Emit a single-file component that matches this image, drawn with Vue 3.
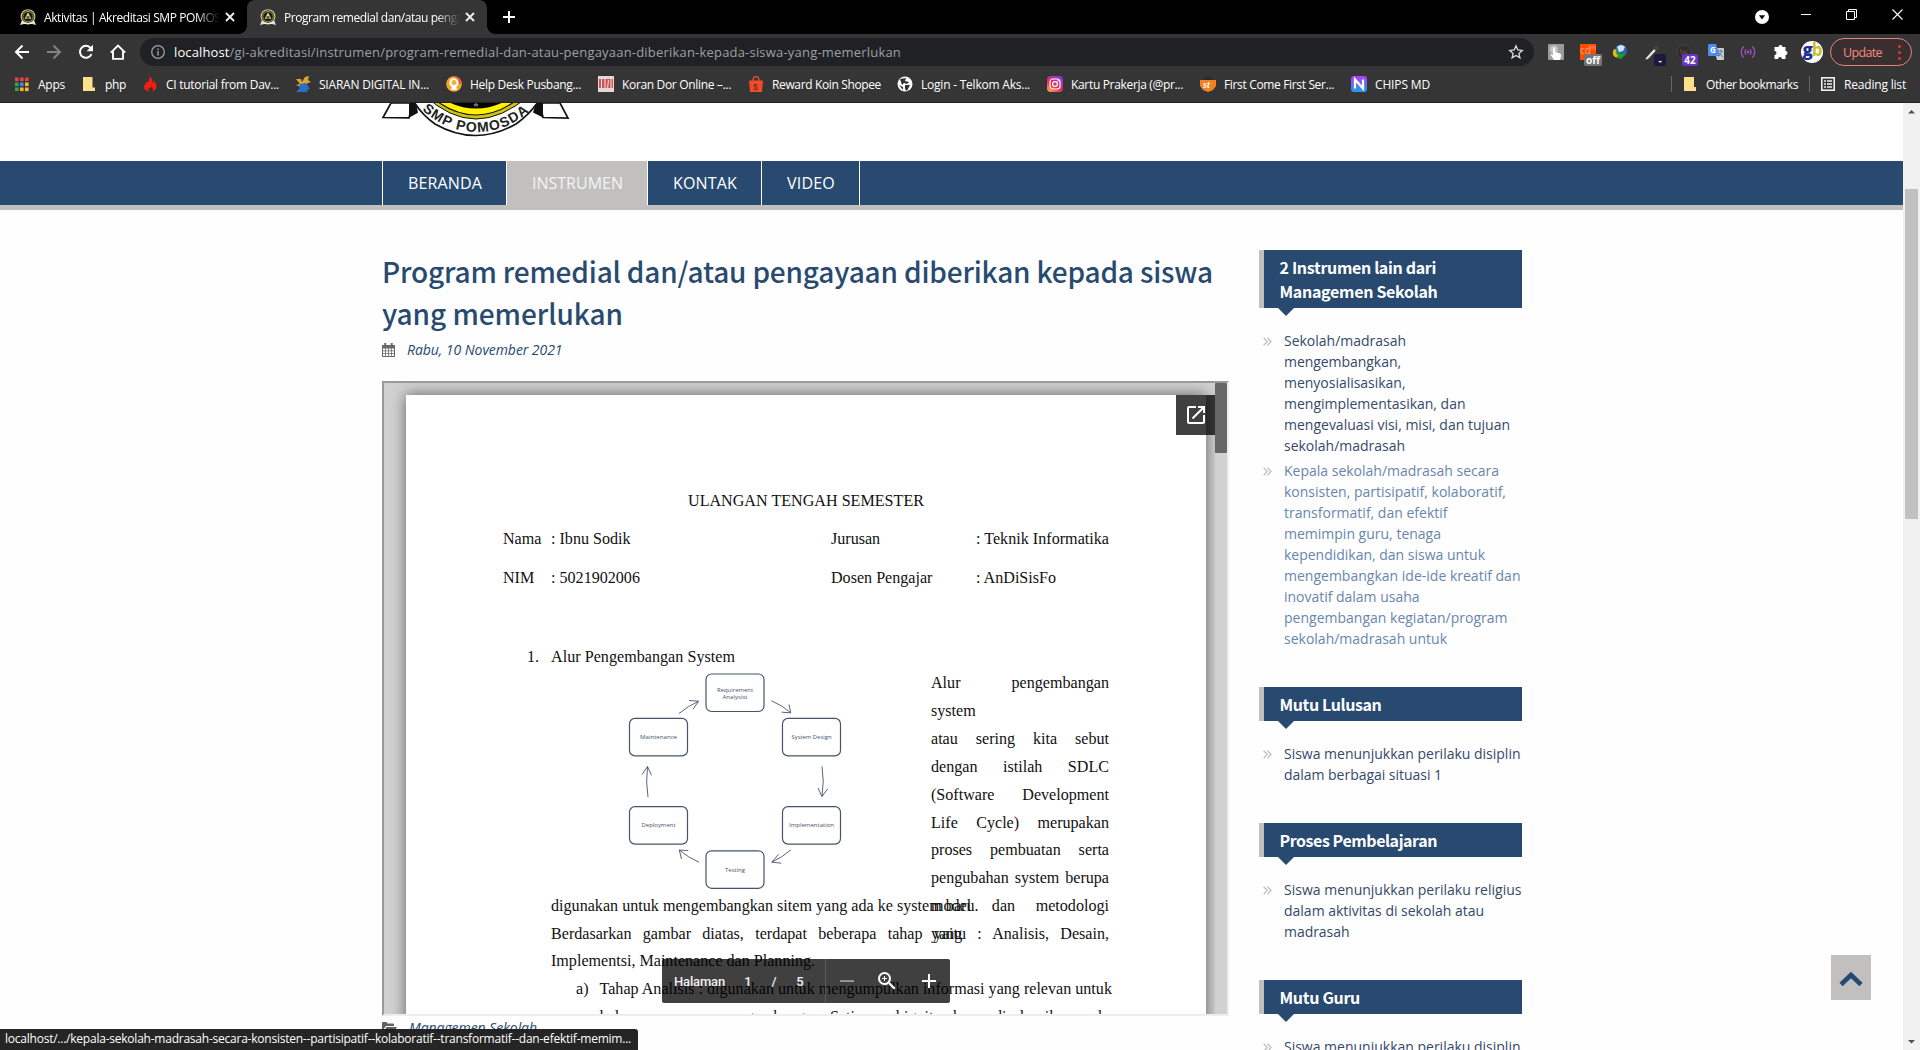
<script setup>
const vFit = {
  mounted(el, { value }) {
    const range = document.createRange()
    range.selectNodeContents(el)
    const natural = range.getBoundingClientRect().width
    const count = el.textContent.length
    el.style.letterSpacing = (value - natural) / count + 'px'
  }
}

const bookmarks = [
  { icon: 'apps', text: 'Apps', w: 27, box: 67 },
  { icon: 'folder', text: 'php', w: 21, box: 61 },
  { icon: 'flame', text: 'CI tutorial from Dav...', w: 113, box: 153 },
  { icon: 'siaran', text: 'SIARAN DIGITAL IN...', w: 110, box: 151 },
  { icon: 'help', text: 'Help Desk Pusbang...', w: 111, box: 152 },
  { icon: 'koran', text: 'Koran Dor Online –...', w: 109, box: 150 },
  { icon: 'shopee', text: 'Reward Koin Shopee', w: 109, box: 149 },
  { icon: 'globe', text: 'Login - Telkom Aks...', w: 109, box: 150 },
  { icon: 'insta', text: 'Kartu Prakerja (@pr...', w: 112, box: 153 },
  { icon: 'first', text: 'First Come First Ser...', w: 110, box: 151 },
  { icon: 'chips', text: 'CHIPS MD', w: 55, box: 90 }
]

const column = [
  'Alur pengembangan system',
  'atau sering kita sebut',
  'dengan istilah SDLC',
  '(Software Development',
  'Life Cycle) merupakan',
  'proses pembuatan serta',
  'pengubahan system berupa',
  'model dan metodologi yang'
]

const nodes = [
  { x: 155, y: 5, lines: ['Requirement', 'Analysist'], w: [36, 25] },
  { x: 231.5, y: 49.4, lines: ['System Design'], w: [40] },
  { x: 231.5, y: 137.6, lines: ['Implementation'], w: [45] },
  { x: 155, y: 181.8, lines: ['Testing'], w: [20] },
  { x: 78.5, y: 137.6, lines: ['Deployment'], w: [34] },
  { x: 78.5, y: 49.4, lines: ['Maintenance'], w: [37] }
]

const widgets = [
  {
    title: [['2 Instrumen lain dari', 156.5], ['Managemen Sekolah', 158]],
    items: [
      {
        lines: [
          ['Sekolah/madrasah', 122], ['mengembangkan,', 117], ['menyosialisasikan,', 121.5],
          ['mengimplementasikan, dan', 181.5], ['mengevaluasi visi, misi, dan tujuan', 226], ['sekolah/madrasah', 121]
        ]
      },
      {
        hover: true,
        lines: [
          ['Kepala sekolah/madrasah secara', 215], ['konsisten, partisipatif, kolaboratif,', 222], ['transformatif, dan efektif', 163.5],
          ['memimpin guru, tenaga', 157], ['kependidikan, dan siswa untuk', 201], ['mengembangkan ide-ide kreatif dan', 236.5],
          ['inovatif dalam usaha', 135.5], ['pengembangan kegiatan/program', 223.5], ['sekolah/madrasah untuk', 163]
        ]
      }
    ]
  },
  { title: [['Mutu Lulusan', 102]], items: [{ lines: [['Siswa menunjukkan perilaku disiplin', 236.5], ['dalam berbagai situasi 1', 158]] }] },
  { title: [['Proses Pembelajaran', 157.5]], items: [{ lines: [['Siswa menunjukkan perilaku religius', 237.5], ['dalam aktivitas di sekolah atau', 200], ['madrasah', 65.5]] }] },
  { title: [['Mutu Guru', 80.5]], items: [{ lines: [['Siswa menunjukkan perilaku disiplin', 236.5], ['dalam berbagai situasi', 145]] }] }
]
</script>

<template>
  <div class="window">
    <header class="chrome">
      <div class="tabs">
        <div v-for="(t, i) in [['Aktivitas | Akreditasi SMP POMOSDA', 192], ['Program remedial dan/atau pengayaan', 204]]" :key="i" class="tab" :class="{ active: i === 1 }">
          <svg class="fav" viewBox="0 0 16 16">
            <path d="M0 16l2-5h12l2 5-4-1H4z" fill="#ddd" />
            <circle cx="8" cy="7.6" r="7.4" fill="#c9c9c0" />
            <circle cx="8" cy="7.6" r="6.3" fill="#1d1c08" />
            <circle cx="8" cy="7.6" r="5.2" fill="none" stroke="#a99f20" stroke-width="1" />
            <path d="M8 3.2l3.3 6.5H4.7z" fill="#d8d2ba" />
            <path d="M6.5 7h3v3h-3z" fill="#6b6148" />
            <path d="M3 13.2q5 3 10 0" stroke="#eee" stroke-width="1.4" fill="none" />
          </svg>
          <div class="tab-text"><span v-fit="t[1]">{{ t[0] }}</span></div>
          <svg class="x" viewBox="0 0 10 10"><path d="M1 1l8 8M9 1L1 9" stroke="#f1f1f1" stroke-width="1.8" /></svg>
        </div>
        <svg class="plus" viewBox="0 0 14 14"><path d="M7 1v12M1 7h12" stroke="#fff" stroke-width="2" /></svg>
        <div class="controls">
          <svg width="14" height="14" viewBox="0 0 14 14"><circle cx="7" cy="7" r="7" fill="#fff" /><path d="M3.8 5.2h6.4L7 9.6z" fill="#111" /></svg>
          <svg width="10" height="12" viewBox="0 0 10 12"><path d="M0 6.5h10" stroke="#fff" /></svg>
          <svg width="11" height="11" viewBox="0 0 11 11" fill="none" stroke="#fff"><path d="M.5 2.5h8v8h-8zM2.5 2.500V.5h8v8h-2" /></svg>
          <svg width="11" height="11" viewBox="0 0 11 11"><path d="M.5 .5l10 10M10.500 .5l-10 10" stroke="#fff" stroke-width="1.1" /></svg>
        </div>
      </div>

      <div class="toolbar">
        <div class="navs">
          <svg width="16" height="16" viewBox="0 0 16 16" fill="none" stroke="#fff" stroke-width="2"><path d="M15 8H2M8.500 1.500L2 8l6.500 6.500" /></svg>
          <svg width="16" height="16" viewBox="0 0 16 16" fill="none" stroke="#828282" stroke-width="2"><path d="M1 8h13M7.500 1.500L14 8l-6.500 6.500" /></svg>
          <svg width="16" height="16" viewBox="0 0 16 16"><path d="M13.500 10.200A6 6 0 1 1 12.600 4" fill="none" stroke="#fff" stroke-width="2" /><path d="M15 .8v6.400H8.600z" fill="#fff" /></svg>
          <svg width="16" height="16" viewBox="0 0 16 16"><path d="M.8 8.600L8 1.500l7.200 7.100M3 7v7.900h10V7" fill="none" stroke="#fff" stroke-width="1.900" /></svg>
        </div>
        <div class="omnibox">
          <svg width="14" height="14" viewBox="0 0 14 14"><circle cx="7" cy="7" r="6.300" fill="none" stroke="#9aa0a6" stroke-width="1.300" /><path d="M7 6v4.500M7 3.400v1.500" stroke="#9aa0a6" stroke-width="1.500" /></svg>
          <div class="url"><b v-fit="55.500">localhost</b><span v-fit="671.500">/gi-akreditasi/instrumen/program-remedial-dan-atau-pengayaan-diberikan-kepada-siswa-yang-memerlukan</span></div>
          <svg class="star" width="16" height="16" viewBox="0 0 16 16"><path d="M8 1.800l1.800 4.200 4.500.4-3.400 3 1 4.400L8 11.500l-3.900 2.300 1-4.400-3.400-3 4.500-.4z" fill="none" stroke="#ddd" stroke-width="1.300" /></svg>
        </div>
        <div class="exts">
          <span class="ext"><svg viewBox="0 0 16 16"><rect width="16" height="16" rx="1" fill="#9c9c9c" /><circle cx="6" cy="5.500" r="4" fill="#c7c7c7" /><path d="M5 4q1.200-1.500 2 0v4l5 1.500q1.500.6 1 3L12 16H6L2.500 10.500q1-1 2.500.6z" fill="#fff" /></svg></span>
          <span class="ext"><svg viewBox="0 0 16 16"><rect width="16" height="16" fill="#ff4d00" /><text x="0" y="10" class="cd">cd</text><text x="10" y="6" class="cm">m</text></svg><i class="badge off">off</i></span>
          <span class="ext"><svg viewBox="0 0 16 16"><circle cx="9" cy="6.500" r="6" fill="#2a62b8" /><path d="M5 3q4-4 8 0l-2 4-4 1z" fill="#cfe6f7" /><path d="M2 5q-4 8 5 9l-1-3q-3-1-1-5z" fill="#e3b91d" /><path d="M4 6l5 4 6-1-6 6-5-1.500 2-1.500z" fill="#239b2b" /></svg></span>
          <span class="ext"><svg viewBox="0 0 16 16"><path d="M2 14l8-9 2 1.600-8 8.400-2.500.6z" fill="#e6e6e6" /><path d="M9 4l3-3 3 3-3 3z" fill="#444" /></svg><i class="badge dash">-</i></span>
          <span class="ext"><svg viewBox="0 0 16 16"><circle cx="8" cy="8" r="7" fill="#2f2b2b" stroke="#484343" /><text x="3" y="12" class="wp">W</text></svg><i class="badge n42">42</i></span>
          <span class="ext"><svg viewBox="0 0 16 16"><path d="M6 4h9q1 0 1 1v10q0 1-1 1H9z" fill="#c9cdd2" /><path d="M0 1q0-1 1-1h7l4 12H1q-1 0-1-1z" fill="#4a8cf0" /><text x="2" y="9" class="gt">G</text><path d="M10 7h5M12.500 6v1M14 7q-1 4-4 5.500M11 9l4 4" stroke="#5f7d8c" fill="none" /></svg></span>
          <span class="ext"><svg viewBox="0 0 16 16" fill="none" stroke="#9b4fb5" stroke-width="1.400"><path d="M3.500 2.500q-4.500 5.500 0 11M12.500 2.500q4.500 5.500 0 11M6 5.300q-2 2.700 0 5.400M10 5.300q2 2.700 0 5.400" /><circle cx="8" cy="8" r=".8" fill="#9b4fb5" /></svg></span>
          <span class="ext"><svg viewBox="0 0 16 16"><path d="M6 3a2 2 0 0 1 4 0h3v4a2 2 0 0 1 0 4v4H9.500a2 2 0 0 0-4 0H2v-4a2 2 0 0 0 0-4V3z" fill="#fff" transform="translate(.5 0)" /></svg></span>
        </div>
        <div class="avatar"><b>g</b><em>b</em></div>
        <div class="update"><span v-fit="39">Update</span><i></i></div>
      </div>

      <div class="bookmarks">
        <div v-for="b in bookmarks" :key="b.text" class="bm" :style="{ width: b.box + 'px' }">
          <svg viewBox="0 0 16 16">
            <template v-if="b.icon === 'apps'">
              <g v-for="(c, k) in ['#e8453c','#e8453c','#e8453c','#2fa65a','#4386f5','#f4b92c','#2fa65a','#f4b92c','#f4b92c']" :key="k"><rect :x="1 + (k % 3) * 5" :y="1.500 + Math.floor(k / 3) * 5" width="3.600" height="3.600" :fill="c" /></g>
            </template>
            <path v-else-if="b.icon === 'folder'" d="M2 1h9.500v10.500H14V15H2z" fill="#ffe08a" />
            <path v-else-if="b.icon === 'flame'" d="M7.500 0q4 4 2.500 7 1.500 0 1.500-2.500Q15 8 14.500 11q-.5 3-4.500 4.500 2-3-.5-5Q8 13 6.500 12q-.5 2 1 3.500-6-1-5.500-5Q2.500 7.500 5.500 6 8 4 7.500 0z" fill="#f01e0a" />
            <template v-else-if="b.icon === 'siaran'"><path d="M1 3h5l1 3 3-5 4-1-1 4 3 2-5 2 2 4-3 3H5l1-4-5-2 4-1z" fill="#dba536" /><path d="M5 8l6-1 4 6-3 1 1 2H1l3-3z" fill="#2c6fc4" /></template>
            <template v-else-if="b.icon === 'help'"><circle cx="8" cy="8" r="7.800" fill="#f3a72a" /><path d="M8 0a8 8 0 0 1 7.800 8h-4z" fill="#ee5a34" /><circle cx="8" cy="6.800" r="4.600" fill="#fff" /><path d="M5 14l1-4h4l1 4z" fill="#fff" /><circle cx="8" cy="6.500" r="2.500" fill="#efb235" /></template>
            <template v-else-if="b.icon === 'koran'"><rect width="16" height="16" fill="#e6d7d7" /><path d="M1 3h14v9H1z" fill="#d05656" /><path d="M3.500 3v9M7 3v9M10.500 4l-1 8M13 3v9" stroke="#f1dddd" /></template>
            <template v-else-if="b.icon === 'shopee'"><path d="M1 4.500h14L14 16H2z" fill="#ee4d2d" /><path d="M5 5q0-4.500 3-4.500T11 5" fill="none" stroke="#ee4d2d" stroke-width="1.300" /><text x="5" y="14" class="sh">S</text></template>
            <template v-else-if="b.icon === 'globe'"><circle cx="8" cy="8" r="7.500" fill="#fff" /><path d="M3 3l6-1-1 3 4 1-2 2-3-1-2 2zM8 9l5 0-3 6-2-2zM2 9l4 2v3z" fill="#333" /></template>
            <template v-else-if="b.icon === 'insta'">
              <defs><linearGradient id="ig" x1="0" y1="1" x2=".7" y2="0"><stop offset="0" stop-color="#fdbf4a" /><stop offset=".45" stop-color="#ee2f53" /><stop offset="1" stop-color="#8b35d8" /></linearGradient></defs>
              <rect width="16" height="16" rx="4" fill="url(#ig)" /><rect x="3" y="3" width="10" height="10" rx="3" fill="none" stroke="#fff" stroke-width="1.200" /><circle cx="8" cy="8" r="2.400" fill="none" stroke="#fff" stroke-width="1.200" /><circle cx="11" cy="5" r=".8" fill="#fff" />
            </template>
            <template v-else-if="b.icon === 'first'"><path d="M0 4h16v6l-3 4-5 2-5-2-3-4z" fill="#f58220" /><path d="M4 2l4-2 4 2v2H4z" fill="#2a2a2a" /><text x="3" y="12" class="st">st</text></template>
            <template v-else>
              <defs><linearGradient id="cn" x1="0" y1="0" x2="0" y2="1"><stop offset="0" stop-color="#b13ff0" /><stop offset="1" stop-color="#1f9df2" /></linearGradient></defs>
              <rect width="16" height="16" rx="3" fill="url(#cn)" /><path d="M4 12.500v-9l8 9v-9" fill="none" stroke="#fff" stroke-width="2.200" />
            </template>
          </svg>
          <span v-fit="b.w">{{ b.text }}</span>
        </div>
        <div class="bm-right">
          <i></i>
          <svg class="fo" viewBox="0 0 16 16"><path d="M2 1h10v10h2v4H2z" fill="#ffe08a" /></svg>
          <span class="ob" v-fit="92">Other bookmarks</span>
          <i></i>
          <svg class="rl" viewBox="0 0 16 16"><rect x="1.800" y="1.800" width="12.400" height="12.400" fill="none" stroke="#eee" stroke-width="1.600" /><path d="M4 5h2M4 8h2M4 11h2M7 5h5M7 8h5M7 11h5" stroke="#eee" stroke-width="1.500" /></svg>
          <span v-fit="62">Reading list</span>
        </div>
      </div>
    </header>

    <div class="view">
      <main class="site">
        <div class="logo-row">
          <svg class="logo" width="190" height="40" viewBox="380 103 190 40">
            <path d="M391 103L383 117.500l26 .3 4-14.800zM560 103l8 15-25-.5-3-14.500z" fill="#fff" stroke="#111" stroke-width="1.700" />
            <path d="M409 103v14.800l9-5-2-9.800zM543 103v14.500l-10-5 3-9.500z" fill="#111" />
            <path d="M411 95q6 16 24 29 40 23 81 0 18-13 26-29z" fill="#fff" stroke="#111" stroke-width="1.700" />
            <path d="M424 95Q450 119 476 119T530 95z" fill="#cfc416" stroke="#111" stroke-width="1" />
            <path d="M429 95Q452 115 476 115T523 95z" fill="#fff200" stroke="#111" stroke-width="1.200" />
            <path d="M437 95Q455 108.500 476 108.500T515 95z" fill="#050505" />
            <path d="M476 102l1 2 2 0-1.500 1 .5 2-2-1.200-2 1.200.5-2-1.500-1 2 0z" fill="#777" />
            <path id="arc" d="M419 107Q445 132 477 132T534 107" fill="none" />
            <text class="logo-text"><textPath href="#arc" startOffset="4" textLength="118" lengthAdjust="spacing">SMP POMOSDA</textPath></text>
          </svg>
        </div>
        <nav class="menu">
          <a class="beranda"><span v-fit="74">BERANDA</span></a>
          <a class="instrumen"><span v-fit="91">INSTRUMEN</span></a>
          <a class="kontak"><span v-fit="64">KONTAK</span></a>
          <a class="video"><span v-fit="48">VIDEO</span></a>
        </nav>

        <div class="content">
          <article>
            <h1><span v-fit="831">Program remedial dan/atau pengayaan diberikan kepada siswa</span><span v-fit="241">yang memerlukan</span></h1>
            <div class="date">
              <svg width="13" height="14" viewBox="0 0 13 14"><path d="M0 2h13v12H0z" fill="#6a6a66" /><path d="M1 5.500h2.200v2H1zM4 5.500h2.200v2H4zM7 5.500h2.200v2H7zM10 5.500h2v2h-2zM1 8.300h2.200v2H1zM4 8.300h2.200v2H4zM7 8.300h2.200v2H7zM10 8.300h2v2h-2zM1 11.100h2.200v1.900H1zM4 11.100h2.200v1.900H4zM7 11.100h2.200v1.900H7zM10 11.100h2v1.900h-2z" fill="#fff" /><path d="M3.200 0v3.600M9.700 0v3.600" stroke="#6a6a66" stroke-width="2" /></svg>
              <span v-fit="155.500">Rabu, 10 November 2021</span>
            </div>
            <div class="viewer">
              <div class="paper">
                <div class="doc-title"><span v-fit="236">ULANGAN TENGAH SEMESTER</span></div>
                <div class="row"><span class="c1">Nama</span><span class="c2">: Ibnu Sodik</span><span class="c3">Jurusan</span><span v-fit="133">: Teknik Informatika</span></div>
                <div class="row"><span class="c1">NIM</span><span class="c2">: 5021902006</span><span class="c3">Dosen Pengajar</span><span>: AnDiSisFo</span></div>
                <div class="heading"><span>1.</span><span v-fit="184">Alur Pengembangan System</span></div>
                <div class="split">
                  <svg width="380" height="223" viewBox="0 0 380 223">
                    <g v-for="n in nodes" :key="n.lines[0]">
                      <rect :x="n.x" :y="n.y" width="58" height="37.500" rx="5.500" fill="#fff" stroke="#44546a" stroke-width="1.200" />
                      <text v-for="(l, k) in n.lines" :key="l" class="node" :x="n.x + 29" :y="n.y + (n.lines.length > 1 ? 17.500 + k * 7 : 20.800)" :textLength="n.w[k]" lengthAdjust="spacingAndGlyphs">{{ l }}</text>
                    </g>
                    <g fill="none" stroke="#44546a" stroke-width=".9">
                      <path d="M220.400 31.800Q231 36 239.700 43.800M238 35.500l1.700 8.300-9-.6" />
                      <path d="M271 97.500Q273.500 112 271 127.500M267 119l4 8.500 5.500-7.500" />
                      <path d="M240 180.800Q231 188.500 220.800 193.200M227.500 185.500l-6.700 7.700 9.500 1" />
                      <path d="M148 193.200Q137 188.500 128.300 181M130.500 190l-2.200-9 9 .6" />
                      <path d="M97 128.200Q94.500 113 96.500 97.500M91 105.500l5.500-8 4 8.800" />
                      <path d="M128 44.500Q137 37 147.600 32.200M138 31.500l9.600.7-5.600 8" />
                    </g>
                  </svg>
                  <div class="col"><p v-for="l in column" :key="l">{{ l }}</p></div>
                </div>
                <div class="lines">
                  <p><span v-fit="427.500">digunakan untuk mengembangkan sitem yang ada ke system baru.</span></p>
                  <p class="just">Berdasarkan gambar diatas, terdapat beberapa tahap yaitu : Analisis, Desain,</p>
                  <p><span v-fit="264">Implementsi, Maintenance dan Planning.</span></p>
                  <div class="point"><span>a)</span><p class="just">Tahap Analisis : digunakan untuk mengumpulkan informasi yang relevan untuk</p></div>
                  <div class="point"><span></span><p class="just">kelancaran proses pengembangan. Setiap ambiguitas harus diselesaikan pada</p></div>
                </div>
              </div>
              <div class="popout"><svg width="24" height="24" viewBox="0 0 24 24" fill="#fff"><path d="M19 19H5V5h7V3H5a2 2 0 0 0-2 2v14a2 2 0 0 0 2 2h14c1.100 0 2-.9 2-2v-7h-2v7zM14 3v2h3.590l-9.830 9.830 1.410 1.410L19 6.410V10h2V3h-7z" /></svg></div>
              <div class="vthumb"></div>
              <div class="pager">
                <span class="hal" v-fit="51">Halaman</span><span class="pn">1</span><span class="pn">/</span><span class="pn">5</span>
                <i></i>
                <svg width="24" height="24" viewBox="0 0 24 24" fill="#9b9b9b"><path d="M5 11.200h14v1.800H5z" /></svg>
                <svg width="24" height="24" viewBox="0 0 24 24" fill="#fff"><path d="M15.500 14h-.79l-.28-.27A6.470 6.470 0 0 0 16 9.500 6.500 6.500 0 1 0 9.500 16c1.610 0 3.090-.59 4.230-1.570l.27.28v.79l5 4.990L20.490 19l-4.990-5zm-6 0C7.010 14 5 11.990 5 9.500S7.010 5 9.500 5 14 7.010 14 9.500 11.990 14 9.500 14zM12 10h-2v2H9v-2H7V9h2V7h1v2h2v1z" /></svg>
                <svg width="24" height="24" viewBox="0 0 24 24" fill="#fff"><path d="M19 13h-6v6h-2v-6H5v-2h6V5h2v6h6v2z" /></svg>
              </div>
            </div>
            <div class="cat">
              <svg width="15" height="12" viewBox="0 0 15 12"><path d="M0 1q0-1 1-1h3.500l1 1.500H11q1 0 1 1V4H4L0 9z" fill="#5e6266" /><path d="M4.500 5H15l-3.500 6.500H.5z" fill="#5e6266" /></svg>
              <span v-fit="128">Managemen Sekolah</span>
            </div>
          </article>

          <aside>
            <section v-for="(w, i) in widgets" :key="i">
              <h2><span v-for="t in w.title" :key="t[0]" v-fit="t[1]">{{ t[0] }}</span></h2>
              <ul>
                <li v-for="(it, k) in w.items" :key="k" :class="{ hover: it.hover }">
                  <svg width="9" height="9" viewBox="0 0 9 9"><path d="M.6 .6l3.600 3.900L.6 8.400M4.400 .6L8 4.500 4.400 8.400" fill="none" stroke="#bdbdbd" stroke-width="1.300" /></svg>
                  <div><span v-for="l in it.lines" :key="l[0]" v-fit="l[1]">{{ l[0] }}</span></div>
                </li>
              </ul>
            </section>
          </aside>
        </div>
      </main>
      <div class="scroll">
        <svg width="17" height="17" viewBox="0 0 17 17"><path d="M5 10.500h7L8.500 7z" fill="#505050" /></svg>
        <div class="thumb"></div>
        <svg width="17" height="17" viewBox="0 0 17 17"><path d="M5 7h7l-3.500 3.500z" fill="#505050" /></svg>
      </div>
    </div>
    <div class="totop"><svg width="24" height="16" viewBox="0 0 24 16"><path d="M2 13.500L12 4l10 9.500" fill="none" stroke="#284a70" stroke-width="4.600" /></svg></div>
    <div class="status"><span v-fit="626">localhost/.../kepala-sekolah-madrasah-secara-konsisten--partisipatif--kolaboratif--transformatif--dan-efektif-memim...</span></div>
  </div>
</template>

<style>
html, body { margin: 0; overflow: hidden; background: #fff; }
</style>

<style scoped>
* { box-sizing: border-box; }
svg { display: block; flex: none; }
p, h1, h2, ul { margin: 0; padding: 0; font-weight: 400; }
.window { position: relative; width: 1920px; height: 1050px; overflow: hidden; font-family: "Open Sans", "Noto Sans", sans-serif; white-space: nowrap; }
.chrome { height: 103px; background: #353535; border-bottom: 1px solid #222; font-size: 12px; color: #fff; }
.tabs { display: flex; height: 34px; background: #000; }
.tab { position: relative; width: 240px; height: 34px; display: flex; align-items: center; padding-left: 13px; border-radius: 8px 8px 0 0; }
.tab:first-child { width: 247px; padding-left: 20px; }
.tab.active { background: #353535; }
.tab.active::before, .tab.active::after { content: ""; position: absolute; bottom: 0; width: 8px; height: 8px; background: radial-gradient(circle at 0 0, #000 7.500px, #353535 8px); left: -8px; }
.tab.active::after { left: auto; right: -8px; background: radial-gradient(circle at 100% 0, #000 7.500px, #353535 8px); }
.fav { width: 16px; height: 16px; }
.tab-text { width: 176px; margin: 0 8px 0 8px; overflow: hidden; -webkit-mask-image: linear-gradient(90deg, #000 86%, transparent); mask-image: linear-gradient(90deg, #000 86%, transparent); }
.tab .x { width: 10px; height: 10px; margin-left: -3px; }
.plus { width: 14px; height: 14px; margin: 10px 0 0 15px; }
.controls { display: flex; align-items: center; height: 28px; margin-left: auto; padding-right: 17px; gap: 35px; }
.controls svg:first-child { margin: 6px -3px 0 0; }
.toolbar { display: flex; align-items: center; height: 36px; }
.navs { display: flex; gap: 16px; width: 140px; padding-left: 14px; }
.omnibox { display: flex; align-items: center; width: 1394px; height: 28px; background: #202124; border-radius: 14px; padding: 0 10px 0 11px; }
.url { margin-left: 9px; font-size: 13px; color: #9aa0a6; }
.url b { color: #fff; font-weight: 400; }
.star { margin-left: auto; }
.exts { display: flex; gap: 16px; margin-left: 14px; }
.ext { position: relative; width: 16px; height: 16px; }
.ext svg { width: 16px; height: 16px; }
.cd { font: 10px "Open Sans", sans-serif; fill: #ffa37c; }
.cm { font: 7px "Open Sans", sans-serif; fill: #ffa37c; }
.wp { font: bold 10px "Liberation Serif", serif; fill: #4c4545; }
.gt { font: bold 8px "Open Sans", sans-serif; fill: #fff; }
.sh { font: bold 9px "Open Sans", sans-serif; fill: #7e2415; }
.st { font: italic bold 10px "Liberation Serif", serif; fill: #fff; }
.badge { position: absolute; left: 4px; top: 10px; height: 12px; border-radius: 2px; font: bold 10px/12px "Open Sans", sans-serif; text-align: center; color: #fff; }
.off { width: 18px; background: #757575; }
.dash { left: 10px; width: 12px; background: #1b1a3d; }
.n42 { left: 6px; width: 16px; background: #6b35c4; }
.avatar { width: 22px; height: 22px; margin-left: 13px; border-radius: 50%; background: #fff; display: flex; justify-content: center; font: bold 17px/18px "Open Sans", sans-serif; letter-spacing: -1px; color: #d1bd27; }
.avatar b { color: #1c2f9c; }
.avatar em { font-style: normal; }
.update { display: flex; align-items: center; width: 82px; height: 28px; margin-left: 7px; border: 1px solid #e8837a; border-radius: 14px; padding-left: 12px; color: #f28b82; background: #3a2f30; font-size: 12.500px; }
.update i { width: 3px; height: 3px; margin-left: 16px; border-radius: 50%; background: #e5372b; box-shadow: 0 -6px #e5372b, 0 6px #e5372b; }
.bookmarks { display: flex; align-items: center; height: 28px; padding-left: 14px; }
.bm { display: flex; align-items: center; gap: 8px; }
.bm svg, .fo, .rl { width: 16px; height: 16px; }
.bm-right { display: flex; align-items: center; margin-left: auto; padding-right: 14px; }
.bm-right i { width: 1px; height: 16px; background: #666; }
.fo { margin: 0 8px 0 10px; }
.ob { margin-right: 11px; }
.rl { margin: 0 8px 0 10px; }

.view { display: flex; height: 947px; }
.site { width: 1903px; height: 947px; overflow: hidden; background: #fefefe; }
.logo-row { height: 58px; padding-left: 380px; background: #fff; }
.logo-text { font: bold 14px "Liberation Sans", Arial, sans-serif; fill: #222; }
.menu { display: flex; height: 49px; background: #284a70; border-bottom: 5px solid #c1c0be; padding-left: 382px; }
.menu a { height: 44px; padding-left: 25px; border-left: 1px solid #fff; color: #fff; font-size: 16px; line-height: 44px; }
.beranda { width: 124px; }
.instrumen { width: 141px; background: #c1c0be; }
.menu .instrumen { color: #f4f4f4; }
.kontak { width: 114px; }
.video { width: 98px; border-right: 1px solid #fff; }
.menu .video { width: 99px; }
.content { display: flex; padding: 40px 0 0 382px; }
article { width: 847px; }
h1 { font: 500 28px/42px "Noto Sans CJK SC", "Noto Sans", sans-serif; color: #284a70; }
h1 span { display: block; }
.date { display: flex; align-items: center; gap: 12px; height: 21px; margin-top: 5px; font-size: 14px; font-style: italic; color: #284a70; }
.viewer { position: relative; width: 847px; height: 635px; margin-top: 21px; overflow: hidden; border: 2px solid; border-color: #9a9a9a #eee #eee #9a9a9a; background: #d1d1d1; padding: 12px 0 0 22px; }
.paper { width: 800px; height: 700px; background: #fff; box-shadow: 0 0 14px rgba(0, 0, 0, .55); padding: 92px 97px 0; font: 16.100px/28px "Liberation Serif", "Times New Roman", serif; color: #111; }
.doc-title { display: flex; height: 38px; padding-left: 185px; }
.row { display: flex; height: 38.500px; }
.c1 { width: 48px; }
.c2 { width: 280px; }
.c3 { width: 145px; }
.heading { display: flex; height: 28px; margin: 40.500px 0 -1.500px 24px; }
.heading span:first-child { width: 24px; }
.split { display: flex; margin-left: 48px; height: 223px; }
.col { width: 178px; line-height: 27.900px; }
.col p, .just { white-space: normal; text-align: justify; text-align-last: justify; }
.lines { margin-left: 48px; width: 558px; line-height: 27.700px; }
.point { display: flex; padding-left: 25px; }
.point span { width: 23.500px; }
.point p { width: 509.500px; white-space: nowrap; }
.node { font: 6px "Open Sans", sans-serif; fill: #44546a; text-anchor: middle; }
.popout { position: absolute; right: 11px; top: 12px; width: 40px; height: 40px; padding: 8px; background: rgba(0, 0, 0, .75); }
.vthumb { position: absolute; right: 0; top: 0; width: 12px; height: 70px; background: #666; border-radius: 1px; }
.viewer::after { content: ""; position: absolute; right: 0; top: 70px; width: 12px; height: 570px; background: #d1d1d1; }
.pager { position: absolute; left: 278px; top: 576px; width: 288px; height: 44px; display: flex; align-items: center; border-radius: 2px; background: rgba(0, 0, 0, .75); color: #f1f1f1; font: 500 13px Roboto, sans-serif; padding-left: 12px; }
.hal { width: 61px; }
.pn { width: 26px; text-align: center; }
.pager i { width: 1px; height: 44px; margin: 0 9px 0 12px; background: #5b5b5b; }
.pager svg + svg { margin-left: 16px; }
.pager svg:last-child { margin-left: 18px; }
.cat { display: flex; align-items: center; gap: 12px; height: 21px; margin-top: 1px; font-size: 14px; font-style: italic; color: #284a70; }
aside { width: 263px; margin-left: 30px; }
section { margin-bottom: 38px; }
h2 { position: relative; padding: 5px 0 5px 15.500px; border-left: 5px solid #c1c0be; background: #284a70; color: #fff; font: 700 16px/24px "Noto Sans CJK SC", "Noto Sans", sans-serif; }
h2 span { display: block; }
h2::after { content: ""; position: absolute; left: 14px; top: 100%; border: 8px solid transparent; border-top-color: #284a70; border-bottom: 0; }
ul { list-style: none; padding-top: 22px; }
li { display: flex; padding-left: 4px; gap: 12px; font-size: 14px; line-height: 21px; color: #34496a; }
li + li { margin-top: 4px; }
li svg { margin-top: 7px; }
li span { display: block; }
li.hover { color: #6886ad; }
.scroll { display: flex; flex-direction: column; width: 17px; background: #f1f1f1; }
.thumb { width: 13px; height: 330px; margin: 69px 0 auto 2px; background: #c1c1c1; }
.totop { position: absolute; left: 1831px; top: 955px; width: 40px; height: 45px; padding: 16px 8px; background: #c1c0be; }
.status { position: absolute; left: 0; bottom: 0; width: 638px; height: 21px; padding-left: 5px; border-radius: 0 3px 0 0; background: rgba(30, 30, 30, .97); color: #fff; font-size: 12px; line-height: 20px; }
</style>
